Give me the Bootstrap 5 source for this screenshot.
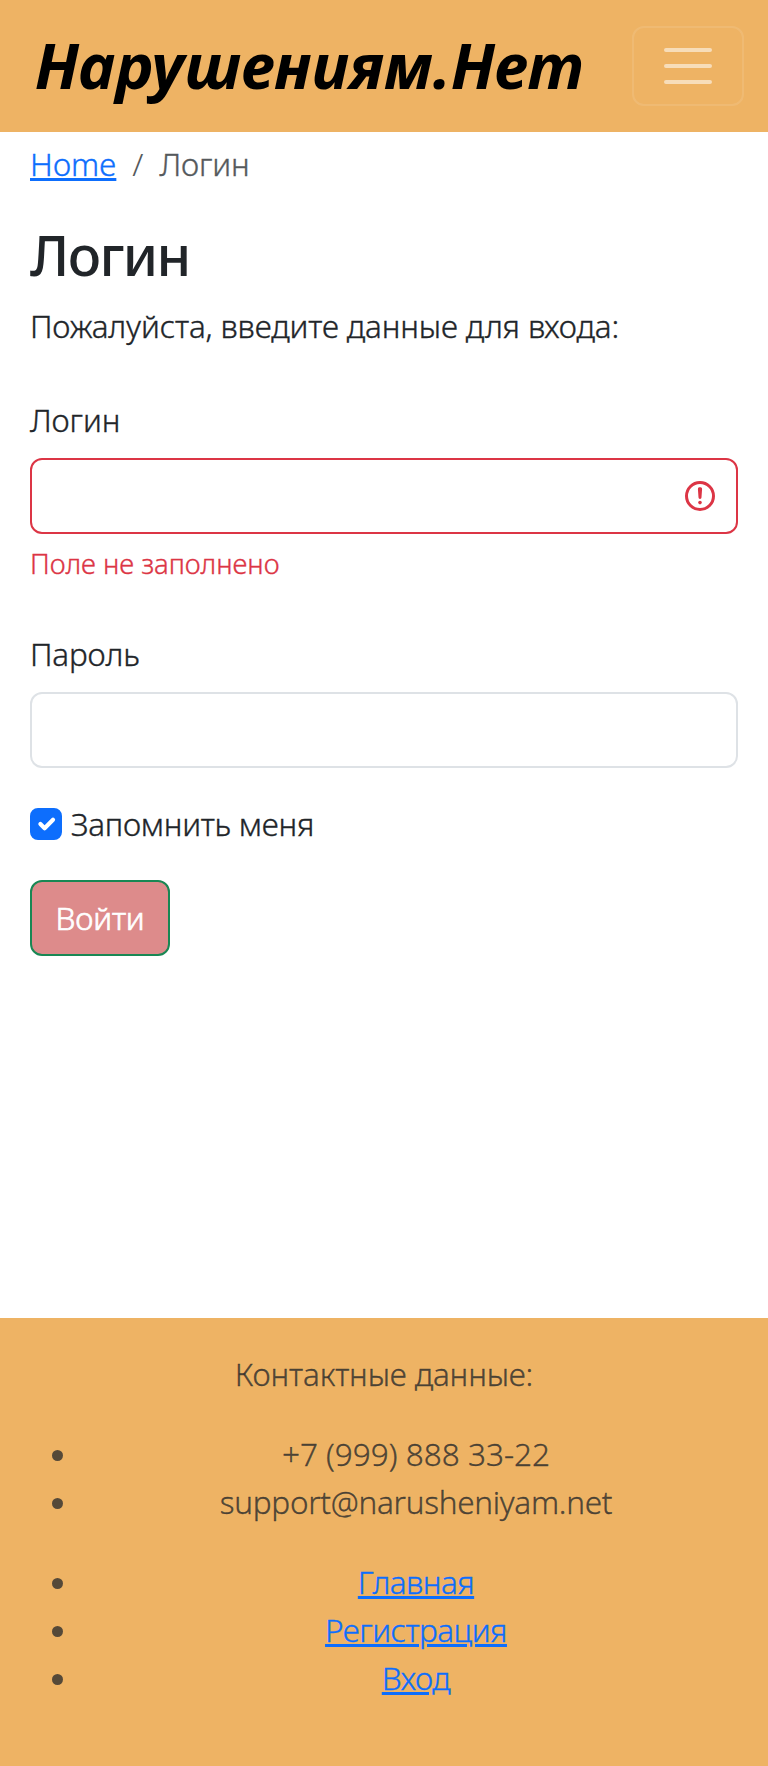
<!DOCTYPE html>
<html lang="ru">
<head>
<meta charset="utf-8">
<meta name="viewport" content="width=device-width, initial-scale=1">
<title>Логин</title>
<link href="https://cdn.jsdelivr.net/npm/bootstrap@5.3.0/dist/css/bootstrap.min.css" rel="stylesheet">
<style>
:root { font-size: 32px; --bs-border-width: 2px; --bs-border-radius: 12px; }
body { font-family: "Noto Sans", "Open Sans", sans-serif; font-weight: 300; }
.txt { font-size: 31.5px; letter-spacing: -.15px; -webkit-text-stroke: .35px currentColor; }
.site-bar { background: #eeb364; }
.site-bar.navbar { height: 132px; }
.site-brand { font-size: 63.3px; line-height: 1; font-weight: 700; font-style: italic; color: #000; margin: 0 0 2px 11px; }
.site-bar .navbar-toggler { border-width: 2px; border-radius: 12px; }
.page-body { padding: 8px 30px 0; }
.breadcrumb { --bs-breadcrumb-divider-color: #55595c; --bs-breadcrumb-item-active-color: #55595c; }
.page-title { font-size: 55.5px; line-height: 66px; padding-top: 2px; margin-bottom: 14px; font-weight: 500; letter-spacing: -1.6px; }
.page-body .form-control { height: 76px; border-width: 2px; }
.page-body .invalid-feedback { color: #dc3545; line-height: 42px; }
.invalid-feedback .txt { font-size: 27.6px; letter-spacing: -.05px; }
.field-label { padding: 14px 0; display: block; }
.remember .form-check-input { border-width: 2px; width: 32px; height: 32px; border-radius: 8px; margin: 8px 8.8px 0 0; }
.remember .txt, .mail { letter-spacing: -.28px; }
.btn-enter { --bs-btn-font-weight: 300; --bs-btn-border-width: 2px; --bs-btn-bg: #dd8b8b; --bs-btn-color: #fff; --bs-btn-border-color: #198754; height: 76px; width: 140px; padding-left: 0; padding-right: 0; }
.btn-enter .txt { -webkit-text-stroke-width: .7px; }
.site-foot { background: #eeb364; color: rgba(33,37,41,.75); height: 448px; }
.site-foot ul { padding-left: 57px; }
.site-foot li { padding-left: 7px; }
.site-foot a .txt { letter-spacing: -.5px; }
.site-foot .phone { letter-spacing: 0; }
</style>
</head>
<body class="d-flex flex-column min-vh-100">
<header>
  <nav class="navbar navbar-dark site-bar">
    <div class="container-fluid flex-nowrap">
      <a class="navbar-brand site-brand py-0" href="#">Нарушениям.Нет</a>
      <button class="navbar-toggler" type="button" aria-label="Меню"><span class="navbar-toggler-icon"></span></button>
    </div>
  </nav>
</header>
<main class="flex-grow-1 page-body">
  <ol class="breadcrumb">
    <li class="breadcrumb-item"><a href="#"><span class="txt">Home</span></a></li>
    <li class="breadcrumb-item active"><span class="txt">Логин</span></li>
  </ol>
  <h1 class="page-title">Логин</h1>
  <p><span class="txt">Пожалуйста, введите данные для входа:</span></p>
  <form novalidate>
    <div class="mb-3">
      <label class="field-label" for="login"><span class="txt">Логин</span></label>
      <input id="login" class="form-control is-invalid" type="text">
      <div class="invalid-feedback"><span class="txt">Поле не заполнено</span></div>
    </div>
    <div class="mb-3">
      <label class="field-label" for="pass"><span class="txt">Пароль</span></label>
      <input id="pass" class="form-control" type="password">
    </div>
    <div class="remember d-flex mb-3">
      <input id="keep" class="form-check-input" type="checkbox" checked>
      <label for="keep"><span class="txt">Запомнить меня</span></label>
    </div>
    <button class="btn btn-enter" type="button"><span class="txt">Войти</span></button>
  </form>
</main>
<footer class="site-foot py-3">
  <div class="container-fluid text-center">
    <p><span class="txt">Контактные данные:</span></p>
    <ul>
      <li><span class="txt phone">+7 (999) 888 33-22</span></li>
      <li><span class="txt mail">support@narusheniyam.net</span></li>
    </ul>
    <ul>
      <li><a href="#"><span class="txt">Главная</span></a></li>
      <li><a href="#"><span class="txt">Регистрация</span></a></li>
      <li><a href="#"><span class="txt">Вход</span></a></li>
    </ul>
  </div>
</footer>
<script src="https://cdn.jsdelivr.net/npm/bootstrap@5.3.0/dist/js/bootstrap.bundle.min.js"></script>
</body>
</html>
